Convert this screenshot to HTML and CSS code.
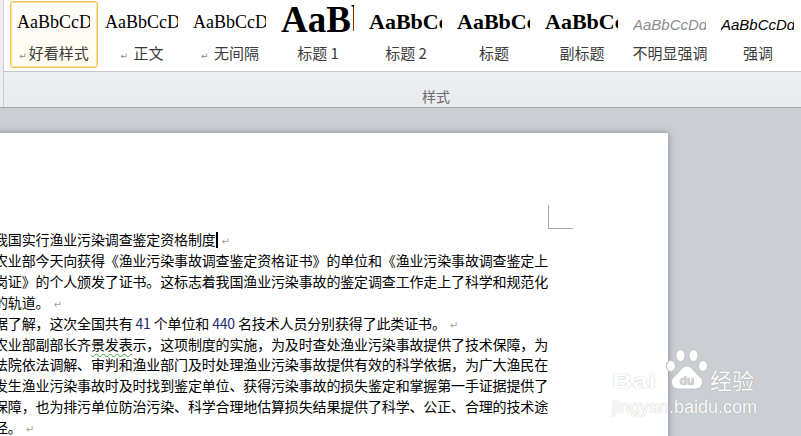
FILE: index.html
```html
<!DOCTYPE html>
<html>

<head>
  <meta charset="utf-8" />
  <title>样式 - 渔业污染调查鉴定资格制度</title>
  <link rel="stylesheet" href="styles.css">
</head>

<body>
  <!-- 上面的样式库 -->
  <div class="ribbon">
    <div class="ribbon-group">
      <div class="gallery">
        <div class="style-item selected">
          <div class="preview p-plain">AaBbCcDd</div>
          <div class="style-name"><span class="mark">↵</span>好看样式</div>
        </div>
        <div class="style-item">
          <div class="preview p-plain">AaBbCcDd</div>
          <div class="style-name"><span class="mark">↵</span> 正文</div>
        </div>
        <div class="style-item">
          <div class="preview p-plain">AaBbCcDd</div>
          <div class="style-name"><span class="mark">↵</span> 无间隔</div>
        </div>
        <div class="style-item">
          <div class="preview p-h1">AaBbCcDd</div>
          <div class="style-name">标题 1</div>
        </div>
        <div class="style-item">
          <div class="preview p-h2">AaBbCcDd</div>
          <div class="style-name">标题 2</div>
        </div>
        <div class="style-item">
          <div class="preview p-h2">AaBbCcDd</div>
          <div class="style-name">标题</div>
        </div>
        <div class="style-item">
          <div class="preview p-h2">AaBbCcDd</div>
          <div class="style-name">副标题</div>
        </div>
        <div class="style-item">
          <div class="preview p-subtle">AaBbCcDd</div>
          <div class="style-name">不明显强调</div>
        </div>
        <div class="style-item">
          <div class="preview p-emph">AaBbCcDd</div>
          <div class="style-name">强调</div>
        </div>
      </div>
      <div class="group-label">样式</div>
    </div>
  </div>

  <!-- 文档区域 -->
  <div class="workspace">
    <div class="page">
      <div class="crop-mark"></div>
      <div class="doc">
        <p>我国实行渔业污染调查鉴定资格制度<span class="caret"></span><span class="pil">↵</span></p>
        <p>农业部今天向获得《渔业污染事故调查鉴定资格证书》的单位和《渔业污染事故调查鉴定上岗证》的个人颁发了证书。这标志着我国渔业污染事故的鉴定调查工作走上了科学和规范化的轨道。<span class="pil">↵</span></p>
        <p>据了解，这次全国共有 <span class="num">41</span> 个单位和 <span class="num">440</span> 名技术人员分别获得了此类证书。<span class="pil">↵</span></p>
        <p>农业部副部长齐<span class="gram">景发表</span>示，这项制度的实施，为及时查处渔业污染事故提供了技术保障，为法院依法调解、审判和渔业部门及时处理渔业污染事故提供有效的科学依据，为广大渔民在发生渔业污染事故时及时找到鉴定单位、获得污染事故的损失鉴定和掌握第一手证据提供了保障，也为排污单位防治污染、科学合理地估算损失结果提供了科学、公正、合理的技术途径。<span class="pil">↵</span></p>
      </div>
    </div>
  </div>

  <!-- 水印 -->
  <div class="watermark">
    <div class="wm-row">
      <span class="wm-bai">Bai</span>
      <svg class="wm-paw" width="44" height="42" viewBox="0 0 44 42">
        <g fill="#fff" stroke="#c4c6ca" stroke-width="1.2">
          <ellipse cx="6" cy="18" rx="4.6" ry="5.6" />
          <ellipse cx="15.5" cy="7.5" rx="4.6" ry="6.2" />
          <ellipse cx="28.5" cy="7.5" rx="4.6" ry="6.2" />
          <ellipse cx="38" cy="18" rx="4.6" ry="5.6" />
          <path d="M22 18 C16.5 18 14.5 24 9.5 28 C4 32 6 41 13 41 L31 41 C38 41 40 32 34.5 28 C29.5 24 27.5 18 22 18 Z" />
        </g>
        <text x="22" y="37" font-family="Liberation Sans" font-size="12" font-weight="bold" fill="#cfd1d4" text-anchor="middle">du</text>
      </svg>
      <span class="wm-jy">经验</span>
    </div>
    <div class="wm-url">jingyan.baidu.com</div>
  </div>
</body>

</html>
```

FILE: styles.css
```css
body {
  margin: 0;
  width: 801px;
  height: 436px;
  overflow: hidden;
  position: relative;
  background-color: #cbced3;
  font-family: "Noto Sans CJK SC", sans-serif;
}

/* 功能区 */
.ribbon {
  height: 107px;
  padding-left: 3px;
  background-color: #eceef1;
  border-bottom: 1px solid #a3a7ad;
}

.ribbon-group {
  width: 864px;
  height: 107px;
  display: flex;
  flex-direction: column;
  border-left: 1px solid #c9ccd0;
  background: linear-gradient(#fbfbfc, #e8eaee);
}

.gallery {
  height: 71px;
  display: flex;
  padding-left: 6px;
  background-color: white;
  border-bottom: 1px solid #c6c7c9;
}

.style-item {
  width: 88px;
  height: 67px;
  margin-top: 1px;
  box-sizing: border-box;
  border: 1px solid transparent;
  border-radius: 3px;
}

.style-item.selected {
  border-color: #eec35a;
  box-shadow: inset 0 0 0 1px #fbe29a;
  background: linear-gradient(#fffefa, #fffbee);
}

.preview {
  width: 73px;
  height: 40px;
  margin-left: 6px;
  overflow: hidden;
  white-space: nowrap;
  line-height: 40px;
  color: black;
}

.p-plain {
  font-family: "Liberation Serif", serif;
  font-size: 18px;
}

.p-h1 {
  font-family: "Liberation Serif", serif;
  font-size: 37px;
  font-weight: bold;
  line-height: 36px;
}

.p-h2 {
  font-family: "Liberation Serif", serif;
  font-size: 22px;
  font-weight: bold;
}

.p-subtle {
  font-family: "Liberation Sans", sans-serif;
  font-size: 15px;
  font-style: italic;
  color: #8c8c8c;
  padding-top: 3px;
  height: 37px;
}

.p-emph {
  font-family: "Liberation Sans", sans-serif;
  font-size: 15px;
  font-style: italic;
  padding-top: 3px;
  height: 37px;
}

.style-name {
  margin-top: 2px;
  text-align: center;
  font-size: 15px;
  line-height: 18px;
  color: #3b3b3b;
  white-space: nowrap;
}

.mark {
  font-family: "DejaVu Sans", sans-serif;
  font-size: 9px;
  color: #8a8a8a;
  margin-right: 2px;
}

.group-label {
  padding-top: 15px;
  text-align: center;
  font-size: 14px;
  line-height: 18px;
  color: #6b6b6b;
}

/* 页面 */
.workspace {
  padding-top: 25px;
}

.page {
  width: 700px;
  height: 320px;
  margin-left: -32px;
  padding-left: 26px;
  padding-top: 72px;
  box-sizing: border-box;
  background-color: white;
  box-shadow: 0 0 7px rgba(70, 75, 85, 0.55);
}

.crop-mark {
  width: 24px;
  height: 23px;
  margin-left: 554px;
  border-left: 1px solid #a8a8a8;
  border-bottom: 1px solid #a8a8a8;
}

.doc {
  width: 556px;
  font-size: 14px;
  letter-spacing: -0.15px;
  line-height: 20.9px;
  color: black;
}

.doc p {
  margin: 0;
}

.num {
  color: #1d2d72;
}

.pil {
  font-family: "DejaVu Sans", sans-serif;
  font-size: 10px;
  line-height: 10px;
  color: #a0a0a0;
  margin-left: 4px;
}

.caret {
  display: inline-block;
  width: 2px;
  height: 16px;
  background-color: black;
  vertical-align: -3px;
}

.gram {
  text-decoration: underline wavy #3da53d;
  text-decoration-thickness: 1px;
  text-underline-offset: 3px;
}

/* 水印 */
.watermark {
  position: absolute;
  left: 612px;
  top: 349px;
  color: white;
  text-shadow: 0 0 1px rgba(0, 0, 0, 0.35);
}

.wm-row {
  display: flex;
  align-items: flex-end;
  height: 42px;
}

.wm-bai {
  display: inline-block;
  width: 52px;
  font-family: "Liberation Sans", sans-serif;
  font-size: 21px;
  font-weight: bold;
  line-height: 20px;
  transform: scaleX(1.35);
  transform-origin: left;
}

.wm-paw {
  margin-left: 1px;
  margin-bottom: 1px;
}

.wm-jy {
  font-size: 22px;
  line-height: 24px;
  margin-left: 1px;
}

.wm-url {
  margin-top: 6px;
  font-family: "Liberation Sans", sans-serif;
  font-size: 18px;
  line-height: 20px;
}
```
